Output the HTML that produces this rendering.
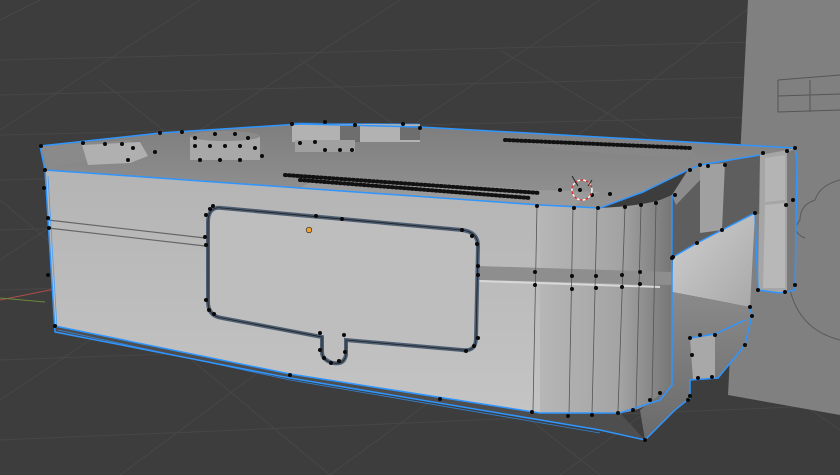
<!DOCTYPE html>
<html><head><style>
html,body{margin:0;padding:0;background:#3d3d3d;overflow:hidden}
svg{display:block}
</style></head><body>
<svg width="840" height="475" viewBox="0 0 840 475" xmlns="http://www.w3.org/2000/svg">
<defs>
<linearGradient id="fr" x1="0" y1="0" x2="0" y2="1">
<stop offset="0" stop-color="#b4b4b4"/><stop offset="0.5" stop-color="#bcbcbc"/><stop offset="1" stop-color="#c4c4c4"/>
</linearGradient>
<linearGradient id="cor" x1="0" y1="0" x2="1" y2="0">
<stop offset="0" stop-color="#b6b6b6"/><stop offset="0.6" stop-color="#a4a4a4"/><stop offset="1" stop-color="#767676"/>
</linearGradient>
<linearGradient id="top" x1="0" y1="0" x2="0" y2="1">
<stop offset="0" stop-color="#7e7e7e"/><stop offset="1" stop-color="#939393"/>
</linearGradient>
<linearGradient id="floor" x1="0" y1="0" x2="1" y2="1">
<stop offset="0" stop-color="#d0d0d0"/><stop offset="1" stop-color="#a8a8a8"/>
</linearGradient>
<linearGradient id="low" x1="0" y1="0" x2="0" y2="1">
<stop offset="0" stop-color="#8a8a8a"/><stop offset="1" stop-color="#6a6a6a"/>
</linearGradient>
</defs>
<rect width="840" height="475" fill="#3d3d3d"/>
<g stroke="#474747" stroke-width="1" fill="none">
<path d="M0 60 L840 40 M0 95 L840 75 M0 135 L840 115 M0 180 L840 160 M0 230 L840 210 M0 290 L840 265 M0 360 L840 330 M0 440 L840 405"/>
<path d="M0 130 L200 0 M0 260 L400 0 M0 400 L600 0 M120 475 L760 0 M330 475 L840 100 M560 475 L840 270 M0 20 L40 0"/>
<path d="M0 200 L330 475 M100 80 L600 475 M300 60 L840 430 M500 50 L840 250"/>
</g>
<path d="M0 300 L110 278" stroke="#b04a4a" stroke-width="1"/>
<path d="M0 298 L45 302" stroke="#6a8a3a" stroke-width="1"/>
<polygon points="748,0 840,0 840,415 728,395" fill="#808080"/>
<path d="M778 80 L840 75 M778 80 L778 112 L840 110 M778 96 L840 94 M810 80 L810 112" stroke="#555" fill="none"/>
<path d="M840 180 Q820 185 815 200 Q800 205 800 220 Q790 232 805 238 M790 290 Q800 330 840 340" stroke="#5a5a5a" fill="none"/>
<polygon points="40,146 160,133 300,124 420,127 795,148 760,155 700,165 688,170 643,192 600,208 540,205 45,170" fill="url(#top)"/>
<polygon points="40,146 130,140 140,150 48,168" fill="#8a8a8a"/>
<polygon points="320,176 540,190 600,192 575,205 540,205 300,188" fill="#9a9a9a"/>
<polygon points="500,137 690,148 700,160 560,150" fill="#888"/>
<rect x="190" y="136" width="70" height="24" fill="#a8a8a8"/>
<ellipse cx="225" cy="136" rx="35" ry="5" fill="#8a8a8a"/>
<rect x="292" y="124" width="128" height="18" fill="#b2b2b2"/>
<rect x="340" y="126" width="20" height="16" fill="#6e6e6e"/>
<rect x="400" y="126" width="20" height="14" fill="#6e6e6e"/>
<rect x="295" y="140" width="60" height="12" fill="#a0a0a0"/>
<polygon points="82,145 140,142 148,156 130,163 88,165" fill="#b0b0b0"/>
<polygon points="45,170 540,205 540,413 290,374 55,326" fill="url(#fr)"/>
<path d="M540 205 L600 208 Q640 206 660 200 L672 195 L672 385 Q650 410 620 413 L540 413 Z" fill="url(#cor)"/>
<path d="M48 220 L205 238 M48 228 L205 246" stroke="#666" stroke-width="1.2" fill="none"/>
<polygon points="478,266 672,272 672,285 478,280" fill="#8e8e8e"/>
<path d="M478 281 L660 287" stroke="#d8d8d8" stroke-width="2"/>
<g stroke="#555" stroke-width="0.8">
<path d="M537 206 L533 410 M573 208 L569 414 M597 208 L592 414 M625 207 L618 412 M641 206 L636 410 M656 203 L652 400"/>
</g>
<path d="M222 208 L462 230 Q478 232 478 246 L476 338 Q476 352 462 350 L346 340 L346 355 Q344 365 333 363 Q322 360 322 352 L322 337 L222 318 Q208 316 208 302 L208 222 Q208 206 222 208 Z" fill="#bebebe" stroke="#4d5e73" stroke-width="4"/>
<path d="M222 208 L462 230 Q478 232 478 246 L476 338 Q476 352 462 350 L346 340 L346 355 Q344 365 333 363 Q322 360 322 352 L322 337 L222 318 Q208 316 208 302 L208 222 Q208 206 222 208 Z" fill="none" stroke="#202020" stroke-width="0.8"/>
<polygon points="672,195 688,170 700,165 760,155 760,213 722,230 697,243 673,257" fill="#5e5e5e"/>
<polygon points="672,195 688,170 700,165 700,180 676,205" fill="#8c8c8c"/>
<polygon points="700,165 725,163 722,230 700,233" fill="#a0a0a0"/>
<polygon points="673,257 697,243 722,230 755,213 750,307 672,292" fill="url(#floor)"/>
<polygon points="672,292 750,307 752,315 745,345 718,378 690,380 690,398 675,410 645,440 640,410 672,385" fill="url(#low)"/>
<polygon points="690,338 715,334 715,378 693,380" fill="#a8a8a8"/>
<polygon points="760,155 787,150 797,148 795,290 780,293 758,290" fill="#a6a6a6"/>
<polygon points="765,158 785,155 785,200 765,202" fill="#b4b4b4"/>
<polygon points="765,205 785,203 785,288 763,288" fill="#b8b8b8"/>
<polygon points="787,152 797,148 795,290 787,293" fill="#7a7a7a"/>
<polygon points="55,326 290,374 540,413 620,413 645,440 600,430 290,378 55,332" fill="#4e4e4e"/>
<g stroke="#2f95ff" stroke-width="1.5" fill="none">
<path d="M40 146 L160 133 L300 124 L420 127 L795 148 L797 160 L795 290 L780 293 L758 290 L755 213 L722 230 L697 243 L673 257"/>
<path d="M40 146 L45 170 L55 332 L290 378 L600 430 L645 440 L675 410 L690 398 L690 380 L718 378 L745 345 L752 315 L750 307"/>
<path d="M45 170 L540 205 L600 208 L643 192 L688 170 L700 165 L760 155"/>
<path d="M55 326 L290 374 L540 413 L620 413 L660 400 L672 385 L672 195"/>
<path d="M690 338 L715 334 L745 320"/>
</g>
<g stroke="#2f95ff" stroke-width="0.8" fill="none" opacity="0.8">
<path d="M48 176 L57 328 M58 330 L290 380 L600 433 M292 123 L420 124"/>
</g>
<g stroke="#111" stroke-width="4" stroke-linecap="round" stroke-dasharray="1 3">
<path d="M285 175 L540 193"/>
<path d="M505 140 L690 148"/>
<path d="M300 180 L530 198"/>
</g>
<g fill="#0a0a0a">
<circle cx="41" cy="146" r="2"/><circle cx="45" cy="170" r="2"/><circle cx="44" cy="188" r="2"/><circle cx="48" cy="218" r="2"/><circle cx="49" cy="228" r="2"/><circle cx="48" cy="275" r="2"/><circle cx="55" cy="326" r="2"/>
<circle cx="83" cy="143" r="2"/><circle cx="105" cy="144" r="2"/><circle cx="122" cy="144" r="2"/><circle cx="133" cy="148" r="2"/><circle cx="128" cy="160" r="2"/><circle cx="155" cy="152" r="2"/><circle cx="160" cy="133" r="2"/><circle cx="182" cy="132" r="2"/>
<circle cx="195" cy="146" r="2"/><circle cx="210" cy="146" r="2"/><circle cx="225" cy="146" r="2"/><circle cx="240" cy="146" r="2"/><circle cx="255" cy="148" r="2"/><circle cx="200" cy="160" r="2"/><circle cx="220" cy="160" r="2"/><circle cx="240" cy="160" r="2"/><circle cx="262" cy="156" r="2"/><circle cx="195" cy="138" r="2"/><circle cx="215" cy="134" r="2"/><circle cx="235" cy="134" r="2"/><circle cx="248" cy="138" r="2"/>
<circle cx="292" cy="124" r="2"/><circle cx="325" cy="122" r="2"/><circle cx="355" cy="125" r="2"/><circle cx="403" cy="124" r="2"/><circle cx="420" cy="128" r="2"/><circle cx="300" cy="143" r="2"/><circle cx="315" cy="142" r="2"/><circle cx="325" cy="150" r="2"/><circle cx="340" cy="150" r="2"/><circle cx="352" cy="150" r="2"/>
<circle cx="210" cy="209" r="2"/><circle cx="213" cy="206" r="2"/><circle cx="206" cy="215" r="2"/><circle cx="205" cy="237" r="2"/><circle cx="206" cy="245" r="2"/><circle cx="206" cy="300" r="2"/><circle cx="209" cy="310" r="2"/><circle cx="214" cy="314" r="2"/><circle cx="316" cy="216" r="2"/><circle cx="342" cy="219" r="2"/>
<circle cx="320" cy="333" r="2"/><circle cx="320" cy="350" r="2"/><circle cx="324" cy="358" r="2"/><circle cx="331" cy="363" r="2"/><circle cx="339" cy="361" r="2"/><circle cx="345" cy="352" r="2"/><circle cx="344" cy="335" r="2"/>
<circle cx="462" cy="230" r="2"/><circle cx="472" cy="236" r="2"/><circle cx="477" cy="244" r="2"/><circle cx="478" cy="266" r="2"/><circle cx="478" cy="275" r="2"/><circle cx="478" cy="338" r="2"/><circle cx="474" cy="346" r="2"/><circle cx="466" cy="351" r="2"/>
<circle cx="537" cy="206" r="2"/><circle cx="574" cy="208" r="2"/><circle cx="598" cy="208" r="2"/><circle cx="625" cy="207" r="2"/><circle cx="641" cy="205" r="2"/><circle cx="656" cy="203" r="2"/>
<circle cx="535" cy="272" r="2"/><circle cx="572" cy="276" r="2"/><circle cx="596" cy="276" r="2"/><circle cx="622" cy="275" r="2"/><circle cx="640" cy="272" r="2"/><circle cx="535" cy="285" r="2"/><circle cx="572" cy="289" r="2"/><circle cx="596" cy="288" r="2"/><circle cx="622" cy="287" r="2"/><circle cx="640" cy="284" r="2"/>
<circle cx="532" cy="412" r="2"/><circle cx="568" cy="416" r="2"/><circle cx="592" cy="415" r="2"/><circle cx="618" cy="413" r="2"/><circle cx="633" cy="410" r="2"/><circle cx="650" cy="400" r="2"/><circle cx="660" cy="393" r="2"/><circle cx="645" cy="440" r="2"/><circle cx="688" cy="400" r="2"/>
<circle cx="673" cy="257" r="2"/><circle cx="697" cy="243" r="2"/><circle cx="722" cy="230" r="2"/><circle cx="755" cy="213" r="2"/><circle cx="700" cy="165" r="2"/><circle cx="708" cy="166" r="2"/><circle cx="725" cy="165" r="2"/><circle cx="690" cy="170" r="2"/><circle cx="675" cy="195" r="2"/><circle cx="672" cy="258" r="2"/>
<circle cx="763" cy="153" r="2"/><circle cx="787" cy="151" r="2"/><circle cx="795" cy="148" r="2"/><circle cx="793" cy="200" r="2"/><circle cx="786" cy="205" r="2"/><circle cx="785" cy="292" r="2"/><circle cx="795" cy="285" r="2"/><circle cx="758" cy="290" r="2"/><circle cx="750" cy="307" r="2"/><circle cx="745" cy="345" r="2"/><circle cx="752" cy="316" r="2"/>
<circle cx="690" cy="338" r="2"/><circle cx="700" cy="335" r="2"/><circle cx="715" cy="335" r="2"/><circle cx="692" cy="355" r="2"/><circle cx="698" cy="378" r="2"/><circle cx="712" cy="377" r="2"/><circle cx="690" cy="396" r="2"/>
<circle cx="580" cy="190" r="2"/><circle cx="592" cy="195" r="2"/><circle cx="610" cy="194" r="2"/><circle cx="560" cy="190" r="2"/>
<circle cx="290" cy="375" r="2"/><circle cx="440" cy="399" r="2"/>
</g>
<circle cx="309" cy="230" r="2.8" fill="#f0a030" stroke="#222" stroke-width="0.6"/>
<circle cx="582" cy="190" r="10" fill="none" stroke="#fff" stroke-width="1.3" stroke-dasharray="3 3"/>
<circle cx="582" cy="190" r="10" fill="none" stroke="#e03030" stroke-width="1.3" stroke-dasharray="3 3" stroke-dashoffset="3"/>
<path d="M572 176 L578 186 M592 180 L588 186" stroke="#222" stroke-width="1"/>
</svg>
</body></html>
